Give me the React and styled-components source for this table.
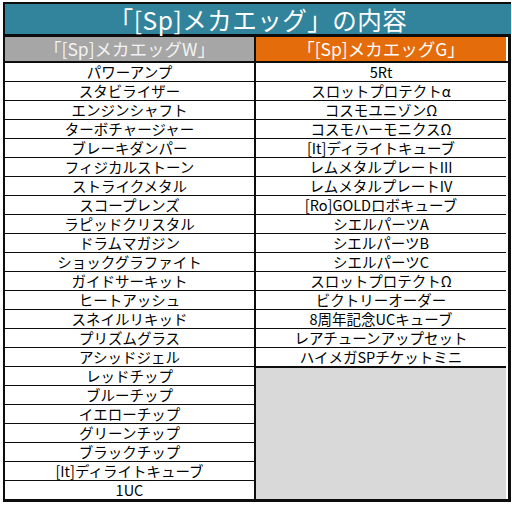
import React from "react";
import styled, { createGlobalStyle } from "styled-components";

const leftItems = [
  "パワーアンプ",
  "スタビライザー",
  "エンジンシャフト",
  "ターボチャージャー",
  "ブレーキダンパー",
  "フィジカルストーン",
  "ストライクメタル",
  "スコープレンズ",
  "ラピッドクリスタル",
  "ドラムマガジン",
  "ショックグラファイト",
  "ガイドサーキット",
  "ヒートアッシュ",
  "スネイルリキッド",
  "プリズムグラス",
  "アシッドジェル",
  "レッドチップ",
  "ブルーチップ",
  "イエローチップ",
  "グリーンチップ",
  "ブラックチップ",
  "[It]ディライトキューブ",
  "1UC",
];

const rightItems = [
  "5Rt",
  "スロットプロテクトα",
  "コスモユニゾンΩ",
  "コスモハーモニクスΩ",
  "[It]ディライトキューブ",
  "レムメタルプレートIII",
  "レムメタルプレートIV",
  "[Ro]GOLDロボキューブ",
  "シエルパーツA",
  "シエルパーツB",
  "シエルパーツC",
  "スロットプロテクトΩ",
  "ビクトリーオーダー",
  "8周年記念UCキューブ",
  "レアチューンアップセット",
  "ハイメガSPチケットミニ",
];

const Global = createGlobalStyle`
  body {
    margin: 0;
    background: #ffffff;
    font-family: "Noto Sans CJK JP", "Noto Sans", sans-serif;
  }
`;

const App = () => {
  return (
    <Page>
      <Global />
      <Table>
        <Title>「[Sp]メカエッグ」の内容</Title>
        <HeadRow>
          <HeadCell bg="#a6a6a6" color="#f2f2f2" divider>「[Sp]メカエッグW」</HeadCell>
          <HeadCell bg="#e46c0a" color="#ffffff">「[Sp]メカエッグG」</HeadCell>
        </HeadRow>
        <Body>
          <Column divider>
            {leftItems.map((name, idx) => (
              <Row key={idx} last={idx === leftItems.length - 1}>{name}</Row>
            ))}
          </Column>
          <Column>
            {rightItems.map((name, idx) => (
              <Row key={idx}>{name}</Row>
            ))}
            <Filler />
          </Column>
        </Body>
      </Table>
    </Page>
  );
};

export default App;

const Page = styled.div`
  width: 512px;
  height: 506px;
  padding: 2px 0 0 3px;
  box-sizing: border-box;
`;

const Table = styled.div`
  width: 506px;
  border-top: 2px solid #0d0d0d;
  border-left: 2px solid #0d0d0d;
  display: flex;
  flex-direction: column;
`;

const Title = styled.div`
  height: 30px;
  box-sizing: border-box;
  padding-top: 1px;
  background: #31849b;
  color: #ffffff;
  font-size: 24.5px;
  line-height: 29px;
  text-align: center;
  border-bottom: 3px solid #0d0d0d;
  box-sizing: content-box;
  height: 29px;
  letter-spacing: 0.5px;
  white-space: nowrap;
`;

const HeadRow = styled.div`
  display: flex;
  height: 24px;
  border-bottom: 2px solid #0d0d0d;
  border-right: 3px solid #0d0d0d;
`;

const HeadCell = styled.div`
  width: ${(p) => (p.divider ? "249px" : "250px")};
  border-right: ${(p) => (p.divider ? "2px solid #0d0d0d" : "0")};
  background: ${(p) => p.bg};
  color: ${(p) => p.color};
  font-size: 17.5px;
  line-height: 24px;
  text-align: center;
  white-space: nowrap;
`;

const Body = styled.div`
  display: flex;
  border-right: 3px solid #0d0d0d;
  border-bottom: 3px solid #0d0d0d;
`;

const Column = styled.div`
  width: ${(p) => (p.divider ? "249px" : "250px")};
  border-right: ${(p) => (p.divider ? "2px solid #0d0d0d" : "0")};
  display: flex;
  flex-direction: column;
`;

const Row = styled.div`
  height: 18px;
  border-bottom: ${(p) => (p.last ? "0" : "1px solid #0d0d0d")};
  background: #ffffff;
  color: #000000;
  font-size: 14.5px;
  line-height: 18px;
  text-align: center;
  white-space: nowrap;
`;

const Filler = styled.div`
  flex: 1;
  background: #d9d9d9;
  border-top: 1px solid #0d0d0d;
`;
